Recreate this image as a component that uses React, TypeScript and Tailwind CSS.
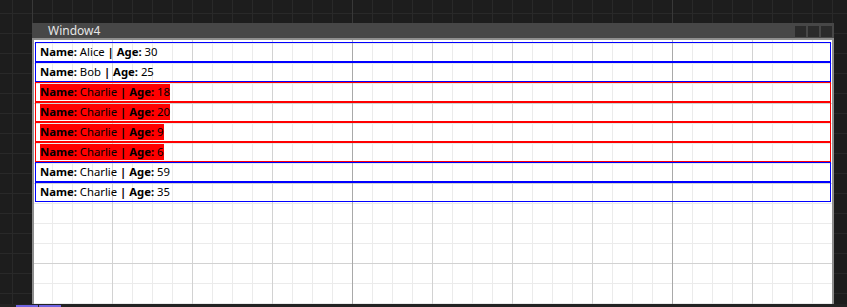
const people = [
  { name: "Alice", age: 30 },
  { name: "Bob", age: 25 },
  { name: "Charlie", age: 18 },
  { name: "Charlie", age: 20 },
  { name: "Charlie", age: 9 },
  { name: "Charlie", age: 6 },
  { name: "Charlie", age: 59 },
  { name: "Charlie", age: 35 },
];

function PersonRow({ name, age }: { name: string; age: number }) {
  // young ones get flagged red
  const flagged = age < 21;
  return (
    <div
      className={`flex h-[20px] items-center border px-[4px] text-[11.3px] leading-[16px] ${
        flagged ? "border-[#ff0000]" : "border-[#0000ff]"
      }`}
    >
      <span
        className={`h-[16px] whitespace-pre text-black ${flagged ? "bg-[#ff0000]" : ""}`}
      >
        <b>Name:</b> {name} <b>| Age:</b> {age}
      </span>
    </div>
  );
}

export default function App() {
  return (
    <div
      className="relative flex h-[307px] w-[847px] flex-col overflow-hidden bg-[#1d1d1d] bg-[linear-gradient(to_right,#383838_1px,transparent_1px),linear-gradient(to_right,#292929_1px,transparent_1px),linear-gradient(to_bottom,#292929_1px,transparent_1px)] bg-[size:320px_100%,20px_20px,20px_20px] bg-[position:32px_0,12px_0,0_13px]"
      style={{ fontFamily: '"Noto Sans", "Open Sans", sans-serif' }}
    >
      <div className="ml-[32px] mt-[23px] flex h-[281px] w-[802px] flex-col">
        <div className="flex h-[15px] shrink-0 items-start justify-between bg-[#474747]">
          <span className="pl-[16px] text-[12px] leading-[15px] text-[#e6e6e6]">Window4</span>
          <div className="flex gap-[2px] pr-[2px] pt-[3px]">
            <div className="h-[11px] w-[11px] bg-[#2b2b2b]" />
            <div className="h-[11px] w-[11px] bg-[#2b2b2b]" />
            <div className="h-[11px] w-[11px] bg-[#2b2b2b]" />
          </div>
        </div>
        <div className="flex-1 border-x-2 border-t-2 border-[#8e8e8e] bg-white bg-[linear-gradient(to_right,#a9a9a9_1px,transparent_1px),linear-gradient(to_right,#d2d2d2_1px,transparent_1px),linear-gradient(to_bottom,#d2d2d2_1px,transparent_1px),linear-gradient(to_right,#ebebeb_1px,transparent_1px),linear-gradient(to_bottom,#ebebeb_1px,transparent_1px)] bg-[size:320px_100%,80px_100%,100%_80px,20px_100%,100%_20px] bg-[position:318px_0,78px_0,0_63px,18px_0,0_3px] px-[1px] pt-[2px]">
          <div className="flex flex-col">
            {people.map((p, i) => (
              <PersonRow key={i} name={p.name} age={p.age} />
            ))}
          </div>
        </div>
      </div>
      <div className="relative h-[3px] w-full bg-[#232323]">
        <div className="absolute left-[16px] top-[1px] h-[2px] w-[22px] bg-[#6f62e0]" />
        <div className="absolute left-[39px] top-[1px] h-[2px] w-[22px] bg-[#6f62e0]" />
      </div>
    </div>
  );
}
